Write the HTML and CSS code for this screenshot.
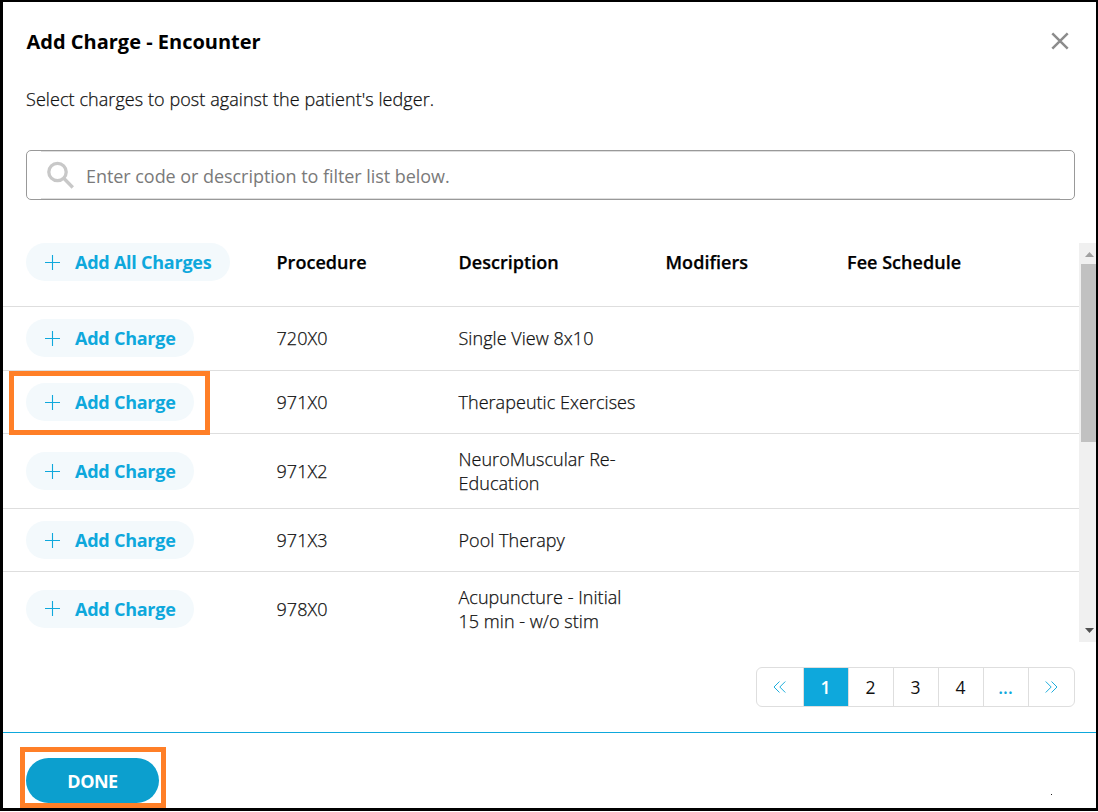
FILE: index.html
```html
<!DOCTYPE html>
<html lang="en">
<head>
<meta charset="utf-8">
<title>Add Charge - Encounter</title>
<link rel="stylesheet" href="styles.css">
</head>
<body>
<svg class="defs" width="0" height="0">
  <symbol id="plus" viewBox="0 0 15 15"><path d="M7.5 0v15M0 7.5h15"/></symbol>
</svg>
<div class="dialog">
  <header class="head">
    <h1 class="title"><span>Add Charge - Encounter</span></h1>
    <svg class="close" viewBox="0 0 18 18"><path d="M1.3 1.3l15.4 15.4M16.700 1.300L1.300 16.700"/></svg>
  </header>
  <p class="intro"><span>Select charges to post against the patient's ledger.</span></p>
  <div class="search">
    <svg class="glass" viewBox="0 0 28 28"><circle cx="10.500" cy="11" r="8.700"/><path d="M16.500 17l9.300 9.500"/></svg>
    <span class="hint">Enter code or description to filter list below.</span>
  </div>
  <div class="list">
    <div class="table">
      <div class="row row-head">
        <div><span class="pill pill-all"><svg class="plus"><use href="#plus"/></svg><span>Add All Charges</span></span></div>
        <div><span>Procedure</span></div><div><span>Description</span></div><div><span>Modifiers</span></div><div><span>Fee Schedule</span></div>
      </div>
      <div class="row r64">
        <div><span class="pill"><svg class="plus"><use href="#plus"/></svg><span>Add Charge</span></span></div>
        <div><span>720X0</span></div><div><span>Single View 8x10</span></div>
      </div>
      <div class="row r63">
        <div class="marked"><span class="pill"><svg class="plus"><use href="#plus"/></svg><span>Add Charge</span></span><i class="mark mark-row"></i></div>
        <div><span>971X0</span></div><div><span>Therapeutic Exercises</span></div>
      </div>
      <div class="row r75">
        <div><span class="pill"><svg class="plus"><use href="#plus"/></svg><span>Add Charge</span></span></div>
        <div><span>971X2</span></div><div><span>NeuroMuscular Re-<br>Education</span></div>
      </div>
      <div class="row r63">
        <div><span class="pill"><svg class="plus"><use href="#plus"/></svg><span>Add Charge</span></span></div>
        <div><span>971X3</span></div><div><span>Pool Therapy</span></div>
      </div>
      <div class="row r75 last">
        <div><span class="pill"><svg class="plus"><use href="#plus"/></svg><span>Add Charge</span></span></div>
        <div><span>978X0</span></div><div><span>Acupuncture - Initial<br>15 min - w/o stim</span></div>
      </div>
    </div>
    <div class="scroll">
      <svg class="arrow up" viewBox="0 0 9 5"><path d="M0 5L4.500 0L9 5z"/></svg>
      <div class="thumb"></div>
      <svg class="arrow down" viewBox="0 0 9 5"><path d="M0 0L4.500 5L9 0z"/></svg>
    </div>
  </div>
  <div class="pager-bar">
    <nav class="pager">
      <span class="edge first"><svg class="chev" viewBox="0 0 13 12"><path d="M6.500 .5L1 6l5.500 5.500M12.300 .5L6.800 6l5.500 5.500"/></svg></span>
      <span class="active">1</span><span>2</span><span>3</span><span>4</span><span class="more">...</span>
      <span class="edge"><svg class="chev" viewBox="0 0 13 12"><path d="M.700 .5L6.200 6L.700 11.500M6.500 .5L12 6L6.500 11.500"/></svg></span>
    </nav>
  </div>
  <footer class="foot">
    <div class="marked"><button class="done"><span>DONE</span></button><i class="mark mark-done"></i></div>
    <i class="dot"></i>
  </footer>
</div>
</body>
</html>
```
FILE: styles.css
```css
* { box-sizing: border-box; }
body {
  margin: 0;
  background: #fff;
  font-family: "Open Sans", sans-serif;
  font-size: 18px;
  line-height: 24px;
  color: #111;
  font-weight: 300;
  letter-spacing: .04px;
  -webkit-text-stroke-width: .25px;
}
.defs { position: absolute; }
.dialog {
  width: 1098px;
  height: 811px;
  border: solid #000;
  border-width: 2px 2px 3px 3px;
  display: flex;
  flex-direction: column;
  overflow: hidden;
}
.head {
  display: flex;
  justify-content: space-between;
  align-items: center;
  height: 78px;
  padding: 0 27px 0 23px;
}
.title {
  margin: 0;
  padding: 1px 0 0 .5px;
  font-size: 20px;
  font-weight: 700;
  color: #000;
  letter-spacing: 0;
  -webkit-text-stroke-width: 0;
}
.close { width: 18px; height: 18px; fill: none; stroke: #8c8c8c; stroke-width: 2.5; }
.intro { margin: 7px 23px 39px; height: 24px; letter-spacing: .07px; }
.search {
  display: flex;
  align-items: center;
  margin: 0 21px 0 23px;
  height: 50px;
  border: 1px solid #999;
  border-radius: 5px;
  padding-left: 20px;
  flex: none;
  background:
    linear-gradient(#dedede, #dedede) 14px 0 / calc(100% - 28px) 1px no-repeat,
    linear-gradient(#dedede, #dedede) 14px 100% / calc(100% - 28px) 1px no-repeat;
}
.glass { width: 28px; height: 28px; fill: none; stroke: #c8c8c8; stroke-width: 3.300; }
.hint {
  margin-left: 11px;
  color: #7a7a7a;
  padding-top: 2px;
  font-weight: 400;
  letter-spacing: -.05px;
  -webkit-text-stroke-width: 0;
}
.list { display: flex; margin-top: 43px; height: 399px; flex: none; }
.table { flex: 1; overflow: hidden; }
.row {
  display: grid;
  grid-template-columns: 250.5px 182px 207px 181.500px 1fr;
  padding-left: 23px;
  align-items: center;
  border-bottom: 1px solid #dedede;
}
.row-head {
  height: 64px;
  padding-bottom: 25px;
  color: #000;
  font-weight: 600;
}
.r64 { height: 64px; }
.r63 { height: 63px; }
.r75 { height: 75px; }
.r64 { padding-bottom: 1px; }
.last { border-bottom: 0; padding-bottom: 2px; }
.pill {
  display: flex;
  align-items: center;
  width: 168px;
  height: 38px;
  border-radius: 19px;
  background: #f3f9fc;
  color: #0ea8dc;
  font-weight: 700;
  letter-spacing: -.24px;
  -webkit-text-stroke-width: 0;
  padding-left: 19px;
}
.pill-all { width: 204px; }
.plus { width: 15px; height: 15px; margin-right: 15px; fill: none; stroke: #0ea8dc; stroke-width: 1.100; }
.marked { position: relative; }
.mark { position: absolute; border: 5px solid #ff7f27; }
.mark-row { left: -17px; top: -12px; width: 201px; height: 64px; z-index: 1; }
.mark-done { left: -6px; top: -11px; width: 146px; height: 61px; }
.scroll {
  width: 17px;
  background: #f0f0f0;
  display: flex;
  flex-direction: column;
}
.arrow { width: 9px; height: 5px; margin-left: 6px; }
.up { margin-top: 9px; fill: #a0a0a0; }
.thumb { margin: 7px 0 0 2px; height: 178px; background: #c1c1c1; }
.down { margin-top: auto; margin-bottom: 9px; fill: #505050; }
.pager-bar {
  display: flex;
  justify-content: flex-end;
  align-items: flex-start;
  padding: 25px 21px 0 0;
  height: 90px;
  flex: none;
}
.pager {
  display: flex;
  height: 40px;
  border: 1px solid #dedede;
  border-radius: 6px;
  font-size: 17.5px;
  font-weight: 400;
  -webkit-text-stroke-width: 0;
}
.pager > span {
  width: 45px;
  border-right: 1px solid #dedede;
  display: flex;
  align-items: center;
  justify-content: center;
  padding-right: 1px;
}
.pager > .first { width: 47px; }
.pager > .edge:last-child { border-right: 0; }
.pager > .active { background: #0ea8dc; color: #fff; font-weight: 600; }
.pager > .more { color: #0ea8dc; font-weight: 600; }
.chev { width: 13px; height: 12px; fill: none; stroke: #1faedd; stroke-width: 1; }
.foot {
  flex: 1;
  border-top: 1px solid #0ea8dc;
  padding: 25px 44px 0 23px;
  display: flex;
  justify-content: space-between;
}
.done {
  display: block;
  width: 133px;
  height: 45px;
  border: 0;
  border-radius: 23px;
  background: #0c9fce;
  color: #fff;
  font: 700 18px/24px "Open Sans", sans-serif;
  letter-spacing: -.5px;
  -webkit-text-stroke-width: 0;
  padding: 1px 0 0;
}
.dot { width: 1px; height: 1px; margin-top: 36px; background: #222; }
```
